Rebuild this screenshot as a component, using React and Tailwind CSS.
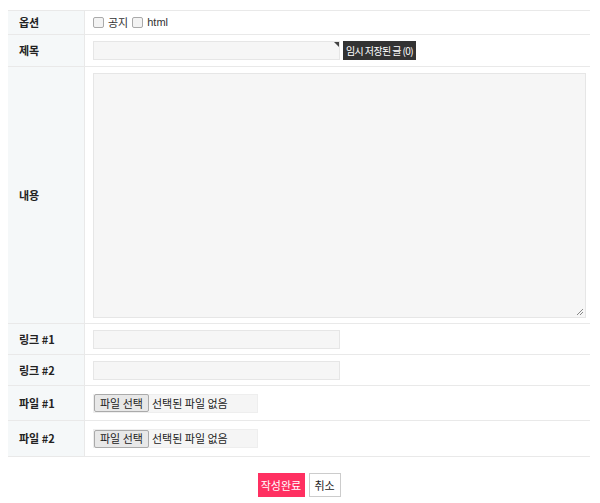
import React from "react";

const font = { fontFamily: '"Noto Sans CJK KR", "Liberation Sans", sans-serif' };

function Row({ label, h, children }) {
  return (
    <div className={`flex border-b border-[#e9e9e9] ${h}`}>
      <div className="w-[77px] shrink-0 bg-[#f5f8f9] border-r border-[#e9e9e9] flex items-center pl-[11px] text-[11px] font-bold text-[#222]">
        {label}
      </div>
      <div className="flex-1 flex items-center pl-[8px] pr-[4px]">{children}</div>
    </div>
  );
}

function FileInput() {
  return (
    <div className="w-[165px] h-[19px] bg-[#f5f5f5] border border-[#eeeeee] flex items-center text-[11px] text-[#222]">
      <span className="h-[18px] px-[5px] bg-[#e8e8e8] border border-[#aaaaaa] rounded-[2px] flex items-center text-[11px] text-[#222]">
        파일 선택
      </span>
      <span className="ml-[3px]">선택된 파일 없음</span>
    </div>
  );
}

export default function App() {
  return (
    <div className="w-[600px] h-[503px] bg-white" style={font}>
      <div className="pt-[10px] pl-[8px] pr-[10px]">
        <div className="border-t border-[#e9e9e9]">
          <Row label="옵션" h="h-[24px]">
            <div className="flex items-center text-[11px] text-[#333]">
              <span className="w-[11px] h-[11px] border border-[#aaa] rounded-[2px] bg-[#f3f3f3] inline-block"></span>
              <span className="ml-[4px]">공지</span>
              <span className="ml-[4px] w-[11px] h-[11px] border border-[#aaa] rounded-[2px] bg-[#f3f3f3] inline-block"></span>
              <span className="ml-[4px]" style={{ fontFamily: '"Liberation Sans", sans-serif' }}>html</span>
            </div>
          </Row>
          <Row label="제목" h="h-[32px]">
            <div className="relative w-[247px] h-[19px] bg-[#f6f6f6] border border-[#e6e6e6]">
              <div className="absolute right-[0px] top-[0px] w-0 h-0 border-l-[5px] border-l-transparent border-t-[5px] border-t-[#444]"></div>
            </div>
            <div className="ml-[3px] h-[19px] px-[3px] bg-[#333] text-white text-[10px] tracking-[-0.6px] flex items-center whitespace-nowrap">
              임시 저장된 글 (0)
            </div>
          </Row>
          <Row label="내용" h="h-[257px]">
            <div className="relative w-full h-[245px] bg-[#f6f6f6] border border-[#e6e6e6]">
              <svg className="absolute right-[1px] bottom-[1px]" width="8" height="8" viewBox="0 0 8 8">
                <path d="M7 1 L1 7 M7 4 L4 7" stroke="#888" strokeWidth="1" />
              </svg>
            </div>
          </Row>
          <Row label="링크 #1" h="h-[31px]">
            <div className="w-[247px] h-[19px] bg-[#f6f6f6] border border-[#e6e6e6]"></div>
          </Row>
          <Row label="링크 #2" h="h-[31px]">
            <div className="w-[247px] h-[19px] bg-[#f6f6f6] border border-[#e6e6e6]"></div>
          </Row>
          <Row label="파일 #1" h="h-[35px]">
            <FileInput />
          </Row>
          <Row label="파일 #2" h="h-[36px]">
            <FileInput />
          </Row>
        </div>
        <div className="flex justify-center gap-[4px] mt-[16px]">
          <div className="w-[47px] h-[24px] bg-[#ff3061] text-white text-[11px] flex items-center justify-center">
            작성완료
          </div>
          <div className="w-[32px] h-[24px] bg-white border border-[#cccccc] text-[#222] text-[11px] flex items-center justify-center">
            취소
          </div>
        </div>
      </div>
    </div>
  );
}
